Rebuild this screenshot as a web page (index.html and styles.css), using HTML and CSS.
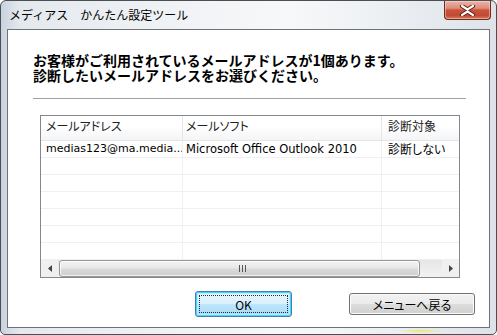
FILE: index.html
```html
<!DOCTYPE html>
<html lang="ja">
<head>
<meta charset="utf-8">
<title>メディアス　かんたん設定ツール</title>
<link rel="stylesheet" href="styles.css">
</head>
<body>
<div class="window">
  <div class="titlebar">
    <span class="title">メディアス　かんたん設定ツール</span>
    <div class="close">
      <svg width="17" height="11" viewBox="0 0 17 11">
        <path d="M3 1 L8.5 4.5 L14 1 M3 10 L8.5 6.5 L14 10" fill="none" stroke="#5a1a12" stroke-width="4" stroke-linecap="round"/>
        <path d="M3 1 L8.5 4.5 L14 1 M3 10 L8.5 6.5 L14 10" fill="none" stroke="#ffffff" stroke-width="2.2" stroke-linecap="round"/>
      </svg>
    </div>
  </div>
  <div class="middle">
    <div class="client">
      <p class="heading"><span class="hline">お客様がご利用されているメールアドレスが1個あります。</span><span class="hline">診断したいメールアドレスをお選びください。</span></p>
      <div class="sep"></div>
      <div class="list">
        <div class="lhead">
          <div class="cell c1">メールアドレス</div>
          <div class="cell c2">メールソフト</div>
          <div class="cell c3">診断対象</div>
        </div>
        <div class="rows">
          <div class="row">
            <div class="cell c1 latin">medias123@ma.media...</div>
            <div class="cell c2 latin wide">Microsoft Office Outlook 2010</div>
            <div class="cell c3">診断しない</div>
          </div>
          <div class="row"><div class="cell c1"></div><div class="cell c2"></div><div class="cell c3"></div></div>
          <div class="row"><div class="cell c1"></div><div class="cell c2"></div><div class="cell c3"></div></div>
          <div class="row"><div class="cell c1"></div><div class="cell c2"></div><div class="cell c3"></div></div>
          <div class="row"><div class="cell c1"></div><div class="cell c2"></div><div class="cell c3"></div></div>
          <div class="row"><div class="cell c1"></div><div class="cell c2"></div><div class="cell c3"></div></div>
          <div class="row"><div class="cell c1"></div><div class="cell c2"></div><div class="cell c3"></div></div>
        </div>
        <div class="hscroll">
          <div class="arrow"><svg width="4" height="7" viewBox="0 0 4 7"><path d="M4 0 L0 3.5 L4 7 Z" fill="#444"/></svg></div>
          <div class="track">
            <div class="thumb"><span class="grip"></span></div>
          </div>
          <div class="arrow"><svg width="4" height="7" viewBox="0 0 4 7"><path d="M0 0 L4 3.5 L0 7 Z" fill="#444"/></svg></div>
        </div>
      </div>
      <div class="buttons">
        <button class="btn ok"><span class="focus">OK</span></button>
        <button class="btn menu">メニューへ戻る</button>
      </div>
    </div>
  </div>
  <div class="bottomframe"><span class="glow"></span></div>
</div>
</body>
</html>
```

FILE: styles.css
```css
* { box-sizing: border-box; }
html, body { margin: 0; padding: 0; background: #ffffff; }
body {
  font-family: "Noto Sans CJK JP", "Noto Sans", sans-serif;
  font-size: 12px;
  color: #000;
}
.window {
  width: 497px;
  height: 335px;
  border: 1px solid #4b4f55;
  border-radius: 6px 6px 5px 5px;
  background: linear-gradient(90deg, #c9d3de 0%, #e4e9ee 4%, #eef1f4 30%, #f7f8fa 58%, #eef1f4 75%, #dde3e9 100%);
  display: flex;
  flex-direction: column;
  overflow: hidden;
}
.titlebar {
  height: 28px;
  display: flex;
  align-items: flex-start;
  flex: none;
}
.title {
  padding-left: 8px;
  margin-top: 6px;
  font-size: 12px;
  line-height: 16px;
  color: #000;
  white-space: nowrap;
}
.close {
  margin-left: auto;
  margin-right: 5px;
  width: 47px;
  height: 19px;
  border: 1px solid #6d2b22;
  border-top: none;
  border-radius: 0 0 4px 4px;
  background: linear-gradient(180deg, #eab5a8 0%, #de8d79 40%, #c9533d 50%, #c24a33 80%, #d47c5e 100%);
  box-shadow: inset 0 0 0 1px rgba(255, 230, 220, 0.45);
  display: flex;
  align-items: center;
  justify-content: center;
}
.close svg { display: block; }
.middle {
  flex: none;
  height: 299px;
  padding-left: 6px;
  padding-right: 6px;
  display: flex;
}
.client {
  width: 483px;
  height: 299px;
  border: 1px solid #6e7378;
  background: #ffffff;
  display: flex;
  flex-direction: column;
}
.heading {
  margin: 23px 0 0 25px;
  font-size: 14px;
  font-weight: bold;
  white-space: nowrap;
  display: flex;
  flex-direction: column;
}
.hline {
  display: block;
  height: 15px;
  line-height: 15px;
}
.sep {
  margin: 15px 0 0 25px;
  width: 433px;
  height: 1px;
  background: #a0a0a0;
  flex: none;
}
.list {
  margin: 16px 0 0 32px;
  width: 420px;
  height: 163px;
  border: 1px solid #828790;
  display: flex;
  flex-direction: column;
  flex: none;
  overflow: hidden;
}
.lhead {
  height: 25px;
  display: flex;
  border-bottom: 1px solid #e5e5e5;
  background: linear-gradient(180deg, #ffffff 0%, #ffffff 40%, #f4f5f7 100%);
  flex: none;
}
.cell {
  padding-left: 6px;
  white-space: nowrap;
  overflow: hidden;
  font-feature-settings: "palt";
}
.lhead .cell {
  line-height: 18px;
  padding-top: 1px;
  color: #222;
}
.c1 { width: 142px; flex: none; border-right: 1px solid #e5e5e5; padding-left: 5px; }
.c2 { width: 199px; flex: none; border-right: 1px solid #e5e5e5; padding-left: 3px; }
.c3 { flex: 1; padding-left: 6px; }
.rows { flex: 1; display: flex; flex-direction: column; }
.row {
  height: 17px;
  display: flex;
  border-bottom: 1px solid #f0f0f0;
  flex: none;
}
.row .cell {
  line-height: 16px;
  border-right-color: #f0f0f0;
}
.latin {
  font-family: "DejaVu Sans", sans-serif;
  font-size: 11px;
}
.wide { font-size: 11.5px; }
.hscroll {
  height: 17px;
  display: flex;
  background: #e9e9e9;
  flex: none;
}
.arrow {
  width: 17px;
  height: 17px;
  display: flex;
  align-items: center;
  justify-content: center;
  background: #f0f0f0;
}
.track {
  flex: 1;
  padding: 0 22px 0 1px;
  background: linear-gradient(180deg, #e6e6e6, #f2f2f2);
}
.thumb {
  height: 17px;
  border: 1px solid #979797;
  border-radius: 3px;
  background: linear-gradient(180deg, #f3f3f3 0%, #e8e8e8 45%, #d9d9d9 55%, #cfcfcf 100%);
  box-shadow: inset 0 0 0 1px rgba(255, 255, 255, 0.7);
  display: flex;
  align-items: center;
  justify-content: center;
}
.grip {
  width: 7px;
  height: 7px;
  margin-left: 6px;
  background: linear-gradient(90deg, #555 0 1px, transparent 1px 3px, #555 3px 4px, transparent 4px 6px, #555 6px 7px);
}
.buttons {
  display: flex;
  align-items: center;
  margin: 13px 0 0 187px;
  gap: 57px;
}
.btn {
  font-family: "Noto Sans CJK JP", "Noto Sans", sans-serif;
  font-size: 12px;
  color: #000;
  padding: 0;
  border: 1px solid #707070;
  border-radius: 3px;
  background: linear-gradient(180deg, #f2f2f2 0%, #ebebeb 48%, #dddddd 52%, #cfcfcf 100%);
  box-shadow: inset 0 0 0 1px #fcfcfc;
  display: flex;
  align-items: center;
  justify-content: center;
}
.ok {
  width: 97px;
  height: 26px;
  border-color: #3c7fb1;
  background: linear-gradient(180deg, #eaf6fd 0%, #d9f0fc 48%, #bee6fd 52%, #a7d9f5 100%);
  box-shadow: inset 0 0 0 1px #48d4fe, inset 0 0 0 2px #bfeafd;
  padding: 3px;
}
.focus {
  width: 100%;
  height: 100%;
  border: 1px dotted #1c3040;
  display: flex;
  align-items: center;
  justify-content: center;
  font-feature-settings: "palt";
}
.menu {
  width: 126px;
  height: 22px;
  font-feature-settings: "palt";
}
.bottomframe {
  flex: 1;
  position: relative;
}
.glow {
  position: absolute;
  left: 396px;
  top: 1px;
  width: 48px;
  height: 4px;
  border-radius: 3px;
  background: radial-gradient(ellipse at center, rgba(240, 230, 90, 0.9), rgba(240, 230, 90, 0) 70%);
}
```
